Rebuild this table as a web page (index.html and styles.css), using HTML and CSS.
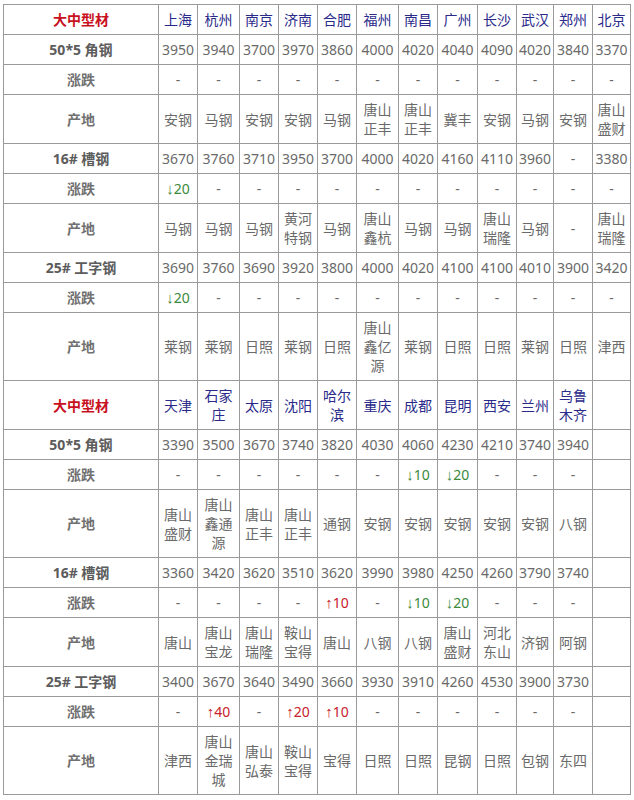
FILE: index.html
```html
<!DOCTYPE html>
<html lang="zh">
<head>
<meta charset="utf-8">
<title>大中型材价格</title>
<link rel="stylesheet" href="styles.css">
</head>
<body>
<table class="price">
<colgroup>
<col class="c0"><col class="c39"><col class="c42"><col class="c39"><col class="c39"><col class="c39"><col class="c42"><col class="c39"><col class="c40"><col class="c39"><col class="c37"><col class="c39"><col class="c38">
</colgroup>
<tbody>
<tr class="head"><th class="title">大中型材</th><td>上海</td><td>杭州</td><td>南京</td><td>济南</td><td>合肥</td><td>福州</td><td>南昌</td><td>广州</td><td>长沙</td><td>武汉</td><td>郑州</td><td>北京</td></tr>
<tr><th>50*5 角钢</th><td>3950</td><td>3940</td><td>3700</td><td>3970</td><td>3860</td><td>4000</td><td>4020</td><td>4040</td><td>4090</td><td>4020</td><td>3840</td><td>3370</td></tr>
<tr><th class="sub">涨跌</th><td>-</td><td>-</td><td>-</td><td>-</td><td>-</td><td>-</td><td>-</td><td>-</td><td>-</td><td>-</td><td>-</td><td>-</td></tr>
<tr><th class="sub">产地</th><td>安钢</td><td>马钢</td><td>安钢</td><td>安钢</td><td>马钢</td><td>唐山正丰</td><td>唐山正丰</td><td>冀丰</td><td>安钢</td><td>马钢</td><td>安钢</td><td>唐山盛财</td></tr>
<tr><th>16# 槽钢</th><td>3670</td><td>3760</td><td>3710</td><td>3950</td><td>3700</td><td>4000</td><td>4020</td><td>4160</td><td>4110</td><td>3960</td><td>-</td><td>3380</td></tr>
<tr><th class="sub">涨跌</th><td class="down"><span class="arr">↓</span>20</td><td>-</td><td>-</td><td>-</td><td>-</td><td>-</td><td>-</td><td>-</td><td>-</td><td>-</td><td>-</td><td>-</td></tr>
<tr><th class="sub">产地</th><td>马钢</td><td>马钢</td><td>马钢</td><td>黄河特钢</td><td>马钢</td><td>唐山鑫杭</td><td>马钢</td><td>马钢</td><td>唐山瑞隆</td><td>马钢</td><td>-</td><td>唐山瑞隆</td></tr>
<tr><th>25# 工字钢</th><td>3690</td><td>3760</td><td>3690</td><td>3920</td><td>3800</td><td>4000</td><td>4020</td><td>4100</td><td>4100</td><td>4010</td><td>3900</td><td>3420</td></tr>
<tr><th class="sub">涨跌</th><td class="down"><span class="arr">↓</span>20</td><td>-</td><td>-</td><td>-</td><td>-</td><td>-</td><td>-</td><td>-</td><td>-</td><td>-</td><td>-</td><td>-</td></tr>
<tr><th class="sub">产地</th><td>莱钢</td><td>莱钢</td><td>日照</td><td>莱钢</td><td>日照</td><td>唐山鑫亿源</td><td>莱钢</td><td>日照</td><td>日照</td><td>莱钢</td><td>日照</td><td>津西</td></tr>
<tr class="head"><th class="title">大中型材</th><td>天津</td><td>石家庄</td><td>太原</td><td>沈阳</td><td>哈尔滨</td><td>重庆</td><td>成都</td><td>昆明</td><td>西安</td><td>兰州</td><td>乌鲁木齐</td><td></td></tr>
<tr><th>50*5 角钢</th><td>3390</td><td>3500</td><td>3670</td><td>3740</td><td>3820</td><td>4030</td><td>4060</td><td>4230</td><td>4210</td><td>3740</td><td>3940</td><td></td></tr>
<tr><th class="sub">涨跌</th><td>-</td><td>-</td><td>-</td><td>-</td><td>-</td><td>-</td><td class="down"><span class="arr">↓</span>10</td><td class="down"><span class="arr">↓</span>20</td><td>-</td><td>-</td><td>-</td><td></td></tr>
<tr><th class="sub">产地</th><td>唐山盛财</td><td>唐山鑫通源</td><td>唐山正丰</td><td>唐山正丰</td><td>通钢</td><td>安钢</td><td>安钢</td><td>安钢</td><td>安钢</td><td>安钢</td><td>八钢</td><td></td></tr>
<tr><th>16# 槽钢</th><td>3360</td><td>3420</td><td>3620</td><td>3510</td><td>3620</td><td>3990</td><td>3980</td><td>4250</td><td>4260</td><td>3790</td><td>3740</td><td></td></tr>
<tr><th class="sub">涨跌</th><td>-</td><td>-</td><td>-</td><td>-</td><td class="up"><span class="arr">↑</span>10</td><td>-</td><td class="down"><span class="arr">↓</span>10</td><td class="down"><span class="arr">↓</span>20</td><td>-</td><td>-</td><td>-</td><td></td></tr>
<tr><th class="sub">产地</th><td>唐山</td><td>唐山宝龙</td><td>唐山瑞隆</td><td>鞍山宝得</td><td>唐山</td><td>八钢</td><td>八钢</td><td>唐山盛财</td><td>河北东山</td><td>济钢</td><td>阿钢</td><td></td></tr>
<tr><th>25# 工字钢</th><td>3400</td><td>3670</td><td>3640</td><td>3490</td><td>3660</td><td>3930</td><td>3910</td><td>4260</td><td>4530</td><td>3900</td><td>3730</td><td></td></tr>
<tr><th class="sub">涨跌</th><td>-</td><td class="up"><span class="arr">↑</span>40</td><td>-</td><td class="up"><span class="arr">↑</span>20</td><td class="up"><span class="arr">↑</span>10</td><td>-</td><td>-</td><td>-</td><td>-</td><td>-</td><td>-</td><td></td></tr>
<tr><th class="sub">产地</th><td>津西</td><td>唐山金瑞城</td><td>唐山弘泰</td><td>鞍山宝得</td><td>宝得</td><td>日照</td><td>日照</td><td>昆钢</td><td>日照</td><td>包钢</td><td>东四</td><td></td></tr>
</tbody>
</table>
</body>
</html>
```
FILE: styles.css
```css
html, body {
  margin: 0;
  padding: 0;
  background: #ffffff;
}
body {
  padding: 4px 3px 0 3px;
  font-family: "Noto Sans", "Noto Sans CJK SC", sans-serif;
  font-size: 14px;
  color: #6a6a6a;
}
.price {
  border-collapse: collapse;
  table-layout: fixed;
  width: 628px;
  border: 1px solid #3a3a3a;
}
.c0 { width: 155px; }
.c37 { width: 37px; }
.c38 { width: 38px; }
.c39 { width: 39px; }
.c40 { width: 40px; }
.c42 { width: 42px; }
.price th,
.price td {
  border: 1px solid #9a9a9a;
  padding: 5px 0;
  line-height: 19px;
  text-align: center;
  vertical-align: middle;
  word-break: break-all;
}
.price th {
  font-weight: bold;
  color: #5c5c5c;
}
.price th.sub {
  color: #707070;
}
.price th.title {
  color: #c8101e;
}
.head td {
  color: #2a2a8a;
}
.price td.down {
  color: #3b8a3b;
}
.price td.up {
  color: #c8202a;
}
.arr {
  font-family: "Liberation Sans", "DejaVu Sans", sans-serif;
  font-size: 15px;
  line-height: 0;
}
```
